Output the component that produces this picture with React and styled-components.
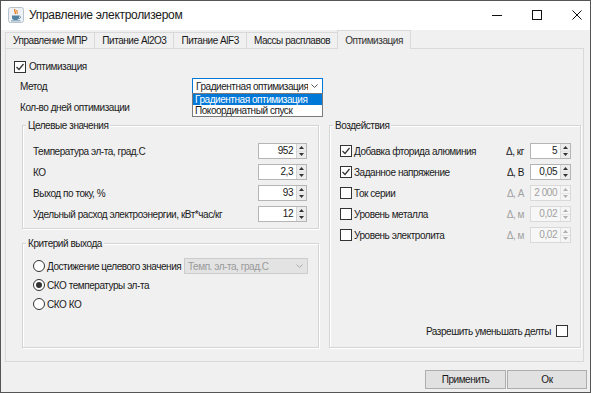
import React from "react"
import styled, { createGlobalStyle } from "styled-components"

const Global = createGlobalStyle`
  html, body {
    margin: 0;
    padding: 0;
    background: #f0f0f0;
  }
  body {
    font-family: "Liberation Sans", Arial, sans-serif;
    font-size: 10px;
    letter-spacing: -0.45px;
    color: #1a1a1a;
  }
  * {
    box-sizing: border-box;
  }
`

const Window = styled.div`
  width: 591px;
  height: 393px;
  border: 1px solid #555;
  background: #f0f0f0;
  display: flex;
  flex-direction: column;
  overflow: hidden;
`

const TitleBar = styled.div`
  height: 29px;
  flex: none;
  background: #fff;
  display: flex;
  align-items: center;
  padding: 0 0 2px 7px;
`

const TitleText = styled.div`
  flex: 1;
  margin-left: 5px;
  font-size: 12px;
  letter-spacing: -0.3px;
`

const Controls = styled.div`
  display: flex;
  align-items: center;
  gap: 30px;
  padding-right: 8px;
`

const TabStrip = styled.div`
  height: 18px;
  flex: none;
  display: flex;
  align-items: flex-end;
  padding-left: 4px;
`

const Tab = styled.div`
  height: ${p => (p.$active ? 19 : 16)}px;
  margin-bottom: ${p => (p.$active ? -1 : 0)}px;
  margin-right: -1px;
  padding: 0 7px;
  display: flex;
  align-items: center;
  border: 1px solid #d9d9d9;
  border-bottom: none;
  background: #f0f0f0;
  color: ${p => (p.$active ? "#333" : "#1a1a1a")};
  position: relative;
  z-index: ${p => (p.$active ? 1 : 0)};
`

const Panel = styled.div`
  height: 314px;
  flex: none;
  margin: 0 6px 0 4px;
  border: 1px solid #d9d9d9;
  padding: 12px 0 0 8px;
  display: flex;
  flex-direction: column;
`

const CheckRow = styled.label`
  display: flex;
  align-items: center;
  gap: 3px;
  height: 12px;
  line-height: 12px;
`

const FieldRow = styled.div`
  display: flex;
  align-items: center;
  margin-top: ${p => p.$top || 0}px;
  padding-left: 6px;
  height: ${p => p.$h || 16}px;
`

const FieldLabel = styled.div`
  width: ${p => (p.$w ? p.$w + "px" : "auto")};
`

const ComboWrap = styled.div`
  position: relative;
  width: ${p => p.$w}px;
  height: 16px;
`

const ComboBox = styled.div`
  height: 16px;
  display: flex;
  align-items: center;
  gap: 3px;
  padding: 0 4px 0 3px;
  border: 1px solid ${p => (p.$disabled ? "#cccccc" : "#0078d7")};
  background: ${p => (p.$disabled ? "#e3e3e3" : "#fff")};
  color: ${p => (p.$disabled ? "#9a9a9a" : "#1a1a1a")};
  span {
    flex: 1;
    white-space: nowrap;
    overflow: hidden;
  }
`

const Popup = styled.div`
  position: absolute;
  top: 15px;
  left: 0;
  width: 100%;
  border: 1px solid #7a7a7a;
  background: #fff;
  z-index: 5;
`

const PopupItem = styled.div`
  height: 11px;
  line-height: 11px;
  padding-left: 2px;
  background: ${p => (p.$selected ? "#0078d7" : "#fff")};
  color: ${p => (p.$selected ? "#fff" : "#1a1a1a")};
  white-space: nowrap;
`

const Groups = styled.div`
  display: flex;
  gap: 10px;
  margin: 11px 0 0 8px;
  height: 223px;
`

const LeftCol = styled.div`
  width: 297px;
  display: flex;
  flex-direction: column;
  gap: 14px;
`

const Group = styled.div`
  position: relative;
  border: 1px solid #d5d5d5;
  box-shadow: inset 1px 1px 0 #fff, 1px 1px 0 #fff;
  display: flex;
  flex-direction: column;
  gap: ${p => p.$gap}px;
  padding: ${p => p.$pad};
  flex: ${p => (p.$grow ? 1 : "none")};
  width: ${p => (p.$w ? p.$w + "px" : "auto")};
`

const Caption = styled.div`
  position: absolute;
  top: -7px;
  left: 3px;
  padding: 0 2px;
  line-height: 13px;
  background: #f0f0f0;
`

const ValueRow = styled.div`
  display: flex;
  align-items: center;
  height: 16px;
`

const Grow = styled.div`
  flex: 1;
  display: flex;
  align-items: center;
  gap: 2px;
  white-space: nowrap;
`

const Delta = styled.div`
  color: ${p => (p.$disabled ? "#a0a0a0" : "#1a1a1a")};
  margin-right: 6px;
`

const SpinField = styled.div`
  width: ${p => p.$w}px;
  height: 16px;
  display: flex;
  border: 1px solid ${p => (p.$disabled ? "#d9d9d9" : "#b5b5b5")};
  background: ${p => (p.$disabled ? "#f7f7f7" : "#fff")};
  color: ${p => (p.$disabled ? "#a0a0a0" : "#1a1a1a")};
`

const SpinValue = styled.div`
  flex: 1;
  text-align: right;
  padding-right: 3px;
  line-height: 14px;
`

const SpinButtons = styled.div`
  width: 10px;
  display: flex;
  flex-direction: column;
  border-left: 1px solid ${p => (p.$disabled ? "#e3e3e3" : "#d4d4d4")};
  background: ${p => (p.$disabled ? "#f5f5f5" : "#ececec")};
`

const SpinHalf = styled.div`
  flex: 1;
  display: flex;
  align-items: center;
  justify-content: center;
  & + & {
    border-top: 1px solid ${p => (p.$disabled ? "#e3e3e3" : "#d4d4d4")};
  }
`

const Box = styled.span`
  width: 12px;
  height: 12px;
  flex: none;
  border: 1px solid #333;
  background: #fff;
  display: inline-flex;
  align-items: center;
  justify-content: center;
  border-radius: ${p => (p.$round ? "50%" : "0")};
`

const Dot = styled.span`
  width: 6px;
  height: 6px;
  border-radius: 50%;
  background: #333;
`

const BottomRow = styled.div`
  margin-top: auto;
  display: flex;
  justify-content: flex-end;
  align-items: center;
  gap: 5px;
  height: 12px;
  padding-right: 3px;
`

const Footer = styled.div`
  flex: 1;
  display: flex;
  justify-content: flex-end;
  align-items: flex-start;
  gap: 1px;
  padding: 8px 3px 0 0;
`

const Button = styled.button`
  width: ${p => p.$w}px;
  height: 19px;
  border: 1px solid #adadad;
  background: #e1e1e1;
  font: inherit;
  letter-spacing: inherit;
  color: #1a1a1a;
  padding: 0;
`

const Check = ({ on }) => (
  <Box>
    {on && (
      <svg width="10" height="10" viewBox="0 0 10 10">
        <polyline points="1.5,5 4,7.5 8.5,2" fill="none" stroke="#333" strokeWidth="1.2" />
      </svg>
    )}
  </Box>
)

const Radio = ({ on }) => <Box $round>{on && <Dot />}</Box>

const Chevron = ({ color = "#555" }) => (
  <svg width="7" height="4" viewBox="0 0 7 4">
    <polyline points="0.5,0.5 3.5,3.5 6.5,0.5" fill="none" stroke={color} strokeWidth="1" />
  </svg>
)

const Tri = ({ up, color }) => (
  <svg width="5" height="3" viewBox="0 0 5 3">
    <polygon points={up ? "0,3 5,3 2.5,0" : "0,0 5,0 2.5,3"} fill={color} />
  </svg>
)

const Spinner = ({ value, w, disabled }) => (
  <SpinField $w={w} $disabled={disabled}>
    <SpinValue>{value}</SpinValue>
    <SpinButtons $disabled={disabled}>
      <SpinHalf $disabled={disabled}><Tri up color={disabled ? "#b0b0b0" : "#333"} /></SpinHalf>
      <SpinHalf $disabled={disabled}><Tri color={disabled ? "#b0b0b0" : "#333"} /></SpinHalf>
    </SpinButtons>
  </SpinField>
)

const JavaIcon = () => (
  <svg width="16" height="16" viewBox="0 0 16 16">
    <rect x="0.5" y="0.5" width="15" height="15" rx="2" fill="#eef1f5" stroke="#b8c2cc" />
    <path d="M7 2 C5.5 4 8.5 5 7 7" fill="none" stroke="#e76f00" strokeWidth="1.2" />
    <path d="M9 3 C8 4.5 10 5 9 7" fill="none" stroke="#e76f00" strokeWidth="1" />
    <path d="M4 8.5 H11 V11 C11 12.5 9.5 13 7.5 13 C5.5 13 4 12.5 4 11 Z" fill="#5382a1" />
    <path d="M11 9 C13 9 13 11.5 11 11.5" fill="none" stroke="#5382a1" strokeWidth="1" />
    <path d="M3 13.8 H12.5" stroke="#5382a1" strokeWidth="0.8" />
  </svg>
)

const targets = [
  ["Температура эл-та, град.С", "952"],
  ["КО", "2,3"],
  ["Выход по току, %", "93"],
  ["Удельный расход электроэнергии, кВт*час/кг", "12"],
]

const actions = [
  { label: "Добавка фторида алюминия", delta: "Δ, кг", value: "5", on: true },
  { label: "Заданное напряжение", delta: "Δ, В", value: "0,05", on: true },
  { label: "Ток серии", delta: "Δ, А", value: "2 000", on: false },
  { label: "Уровень металла", delta: "Δ, м", value: "0,02", on: false },
  { label: "Уровень электролита", delta: "Δ, м", value: "0,02", on: false },
]

const tabs = ["Управление МПР", "Питание Al2O3", "Питание AlF3", "Массы расплавов", "Оптимизация"]

export default function App() {
  return (
    <>
      <Global />
      <Window>
        <TitleBar>
          <JavaIcon />
          <TitleText>Управление электролизером</TitleText>
          <Controls>
            <svg width="10" height="10" viewBox="0 0 10 10">
              <path d="M0 5.5 H10" stroke="#111" strokeWidth="1" />
            </svg>
            <svg width="10" height="10" viewBox="0 0 10 10">
              <rect x="0.5" y="0.5" width="9" height="9" fill="none" stroke="#111" strokeWidth="1" />
            </svg>
            <svg width="10" height="10" viewBox="0 0 10 10">
              <path d="M0.5 0.5 L9.5 9.5 M9.5 0.5 L0.5 9.5" stroke="#111" strokeWidth="1" />
            </svg>
          </Controls>
        </TitleBar>

        <TabStrip>
          {tabs.map((t, i) => (
            <Tab key={t} $active={i === tabs.length - 1}>{t}</Tab>
          ))}
        </TabStrip>

        <Panel>
          <CheckRow>
            <Check on />
            Оптимизация
          </CheckRow>

          <FieldRow $top={5}>
            <FieldLabel $w={172}>Метод</FieldLabel>
            <ComboWrap $w={131}>
              <ComboBox>
                <span>Градиентная оптимизация</span>
                <Chevron />
              </ComboBox>
              <Popup>
                <PopupItem $selected>Градиентная оптимизация</PopupItem>
                <PopupItem>Покоординатный спуск</PopupItem>
              </Popup>
            </ComboWrap>
          </FieldRow>

          <FieldRow $top={6} $h={14}>
            <FieldLabel>Кол-во дней оптимизации</FieldLabel>
          </FieldRow>

          <Groups>
            <LeftCol>
              <Group $gap={5} $pad="17px 11px 6px 10px">
                <Caption>Целевые значения</Caption>
                {targets.map(([label, value]) => (
                  <ValueRow key={label}>
                    <Grow>{label}</Grow>
                    <Spinner value={value} w={49} />
                  </ValueRow>
                ))}
              </Group>

              <Group $grow $gap={3} $pad="14px 10px 0 10px">
                <Caption>Критерий выхода</Caption>
                <ValueRow>
                  <Grow>
                    <Radio />
                    Достижение целевого значения
                  </Grow>
                  <ComboWrap $w={124}>
                    <ComboBox $disabled>
                      <span>Темп. эл-та, град.С</span>
                      <Chevron color="#aaa" />
                    </ComboBox>
                  </ComboWrap>
                </ValueRow>
                <ValueRow>
                  <Grow>
                    <Radio on />
                    СКО температуры эл-та
                  </Grow>
                </ValueRow>
                <ValueRow>
                  <Grow>
                    <Radio />
                    СКО КО
                  </Grow>
                </ValueRow>
              </Group>
            </LeftCol>

            <Group $w={252} $gap={5} $pad="17px 9px 10px 10px">
              <Caption>Воздействия</Caption>
              {actions.map(a => (
                <ValueRow key={a.label}>
                  <Grow>
                    <Check on={a.on} />
                    {a.label}
                  </Grow>
                  <Delta $disabled={!a.on}>{a.delta}</Delta>
                  <Spinner value={a.value} w={41} disabled={!a.on} />
                </ValueRow>
              ))}
              <BottomRow>
                Разрешить уменьшать делты
                <Check />
              </BottomRow>
            </Group>
          </Groups>
        </Panel>

        <Footer>
          <Button $w={81}>Применить</Button>
          <Button $w={80}>Ок</Button>
        </Footer>
      </Window>
    </>
  )
}
